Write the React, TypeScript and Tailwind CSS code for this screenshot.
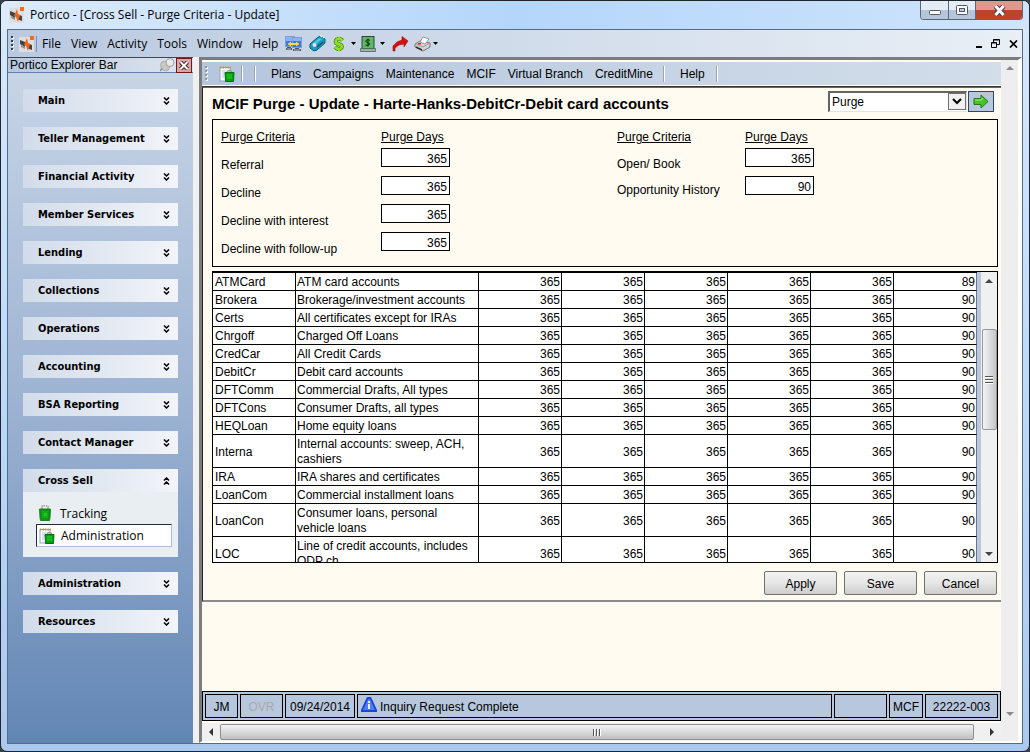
import React, { useState } from 'react';

const sections = [
	'Main',
	'Teller Management',
	'Financial Activity',
	'Member Services',
	'Lending',
	'Collections',
	'Operations',
	'Accounting',
	'BSA Reporting',
	'Contact Manager',
	'Cross Sell',
	'Administration',
	'Resources',
];

const menus = ['File', 'View', 'Activity', 'Tools', 'Window', 'Help'];
const formMenus = ['Plans', 'Campaigns', 'Maintenance', 'MCIF', 'Virtual Branch', 'CreditMine'];

const leftCriteria = [
	{ id: 'referral', label: 'Referral', days: '365' },
	{ id: 'decline', label: 'Decline', days: '365' },
	{ id: 'decline-interest', label: 'Decline with interest', days: '365' },
	{ id: 'decline-follow', label: 'Decline with follow-up', days: '365' },
];
const rightCriteria = [
	{ id: 'open-book', label: 'Open/ Book', days: '365' },
	{ id: 'history', label: 'Opportunity History', days: '90' },
];

const rows = [
	['ATMCard', 'ATM card accounts', '89'],
	['Brokera', 'Brokerage/investment accounts', '90'],
	['Certs', 'All certificates except for IRAs', '90'],
	['Chrgoff', 'Charged Off Loans', '90'],
	['CredCar', 'All Credit Cards', '90'],
	['DebitCr', 'Debit card accounts', '90'],
	['DFTComm', 'Commercial Drafts, All types', '90'],
	['DFTCons', 'Consumer Drafts, all types', '90'],
	['HEQLoan', 'Home equity loans', '90'],
	['Interna', 'Internal accounts: sweep, ACH, cashiers', '90'],
	['IRA', 'IRA shares and certificates', '90'],
	['LoanCom', 'Commercial installment loans', '90'],
	['LoanCon', 'Consumer loans, personal vehicle loans', '90'],
	['LOC', 'Line of credit accounts, includes ODP ch', '90'],
];

const PorticoIcon = () => (
	<svg width="16" height="16" viewBox="0 0 16 16" className="shrink-0">
		<rect x="0" y="1" width="15" height="15" fill="#dedede" />
		<path d="M1 4l5 2v5L1 8zM8 7l5 2v5l-5-2z" fill="#3f444b" />
		<path d="M2 9l4 2v2l-4-2z" fill="#8a8f96" />
		<path d="M8 2l1 5 2 1-2 7-2-5-2-1z" fill="#f0641e" />
		<rect x="11" y="0" width="4" height="4" fill="#ff6a13" />
	</svg>
);

const BagIcon = () => (
	<svg width="14" height="16" viewBox="0 0 14 16" className="shrink-0">
		<path d="M4 4V2q0-1.500 3-1.500T10 2v2" fill="none" stroke="#a8a8a8" strokeWidth="2" strokeDasharray="1.500 .6" />
		<path d="M1.500 4h11l-.5 9-.5 2.500h-9L2 13z" fill="#0a9a12" stroke="#087010" strokeWidth=".8" />
		<rect x="4" y="6" width="6" height="7" fill="#10ad18" />
		<rect x="6" y="8" width="3" height="3" fill="#22c628" />
	</svg>
);

const PadBagIcon = () => (
	<svg width="16" height="16" viewBox="0 0 16 16" className="shrink-0">
		<rect x="1" y="1.500" width="10" height="13.500" fill="#f6fafd" stroke="#8fa6bd" />
		<path d="M1 1.500h11" stroke="#b99a4c" strokeDasharray="1.500 1" strokeWidth="2" />
		<path d="M3 5h5M3 7h3M3 9h2M3 11h2" stroke="#b3c9dc" />
		<path d="M8.500 6.500q0-2 2-2t2 2" fill="none" stroke="#9b9b9b" strokeWidth="1.500" />
		<path d="M6 6.500h9l-.5 9H6.500z" fill="#0b9c13" stroke="#076d0e" />
		<rect x="8" y="8" width="5" height="5" fill="#14bb1c" />
	</svg>
);

const ComputersIcon = () => (
	<svg width="17" height="16" viewBox="0 0 17 16">
		<path d="M2 11h4v1h1v2H1v-2h1zM10 12h4v1h2v2H8v-2h2z" fill="#4f5460" />
		<path d="M2 13h4M9 14h6" stroke="#b9bfca" />
		<rect x=".5" y=".5" width="9" height="10" fill="#3b78dc" stroke="#8d9ad0" />
		<rect x="7.500" y="1.500" width="9" height="10" fill="#3b78dc" stroke="#8d9ad0" />
		<path d="M1 1h6v4H1zM8 2h8v3H8z" fill="#7fb8f6" />
		<path d="M2.500 8L6 5.500V7h5V5.500L14.500 8 11 10.500V9H6v1.500z" fill="#ffdc32" />
	</svg>
);

const TagIcon = () => (
	<svg width="17" height="17" viewBox="0 0 17 17">
		<path d="M1 9l7-6 3-2 2 1 3 2v4l-8 7-3 1-4-3z" fill="#149cc4" stroke="#075a72" />
		<path d="M3 9l7-6 3 1-7 6z" fill="#45c8e4" />
		<circle cx="5.500" cy="10" r="2" fill="#f6d9ee" />
		<path d="M8 12l6-5" stroke="#045066" strokeWidth="1.500" />
		<path d="M11 0l2 2M14 2l1 1" stroke="#e8f8ff" strokeWidth="1.500" />
	</svg>
);

const DollarIcon = () => (
	<svg width="12" height="16" viewBox="0 0 12 16" fill="none">
		<path d="M9.500 4.500Q8 2.500 5 3T3 7l5 2q2 2-.5 3.500T2 11M6 1v2M6 12v3" stroke="#4a8f0a" strokeWidth="4" />
		<path d="M9.500 4.500Q8 2.500 5 3T3 7l5 2q2 2-.5 3.500T2 11M6 .5V3M6 12v3.500" stroke="#8ee022" strokeWidth="2.500" />
	</svg>
);

const CashIcon = () => (
	<svg width="16" height="16" viewBox="0 0 16 16">
		<rect x="2" y=".5" width="12" height="13" fill="#5fb868" stroke="#33463a" />
		<path d="M.5 12.500h15v3H.5z" fill="#a4aca8" stroke="#54605a" strokeWidth=".8" />
		<rect x="2" y="12" width="12" height="1" fill="#3b7a46" />
		<path d="M10 4.500Q8 3 6.500 4t0 2.300l2.500.7q1.500 1-.2 2T5.500 9M8 2.500v8" fill="none" stroke="#0c2c12" />
	</svg>
);

const RedoIcon = () => (
	<svg width="17" height="16" viewBox="0 0 17 16">
		<path d="M1 15V10L5 6l5-2V.5L16 5l-4 6V8L7 9l-4 3v3z" fill="#d80f0f" stroke="#a00808" strokeWidth=".6" />
	</svg>
);

const PrinterIcon = () => (
	<svg width="17" height="16" viewBox="0 0 17 16">
		<path d="M1 8l5-3 10 2v4l-7 4-8-4z" fill="#d6d6d6" stroke="#777" />
		<path d="M1 8l8 3 7-4" fill="none" stroke="#9a9a9a" />
		<path d="M6 6l3-5 6 2-4 5z" fill="#fff" stroke="#777" strokeWidth=".7" />
		<path d="M2 11l6 3" stroke="#333" strokeWidth="1.500" />
		<rect x="4" y="7" width="3" height="1.500" fill="#e02020" />
	</svg>
);

const DropArrow = () => (
	<svg width="5" height="3" viewBox="0 0 5 3">
		<path d="M0 0h5L2.500 3z" fill="#000" />
	</svg>
);

const Chevrons = ({ up }: { up?: boolean }) => (
	<svg width="7" height="8" viewBox="0 0 7 8" className={up ? 'rotate-180' : ''}>
		<path d="M1 .5l2.500 2.500L6 .5M1 4.500L3.500 7 6 4.500" fill="none" stroke="#000" strokeWidth="1.500" />
	</svg>
);

const Grip = ({ dark }: { dark?: boolean }) => (
	<svg width="3" height="15" viewBox="0 0 3 15" className="shrink-0">
		{[0, 4, 8, 12].map((y) => (
			<g key={y}>
				<rect x="1" y={y + 1} width="2" height="2" fill="#fff" />
				<rect x="0" y={y} width="2" height="2" fill={dark ? '#2a3f68' : '#8d99ab'} />
			</g>
		))}
	</svg>
);

const ScrollArrow = ({ d, color }: { d: string; color: string }) => (
	<svg width="8" height="8" viewBox="0 0 8 8">
		<path d={d} fill={color} />
	</svg>
);

const Sep = () => <span className="h-4 w-[2px] border-l border-[#9aa5b4] bg-white" />;

type Criterion = { id: string; label: string; days: string };

const CriteriaGroup = ({ items, labelWidth, rowHeight }: { items: Criterion[]; labelWidth: string; rowHeight: string }) => (
	<div className="flex">
		<div className={labelWidth}>
			<div className="mb-[6px] leading-4 underline">Purge Criteria</div>
			{items.map((item) => (
				<label key={item.id} htmlFor={item.id} className={`flex items-center ${rowHeight}`}>
					{item.label}
				</label>
			))}
		</div>
		<div>
			<div className="mb-[3px] leading-4 underline">Purge Days</div>
			<div className="flex flex-col gap-[9px]">
				{items.map((item) => (
					<input
						key={item.id}
						id={item.id}
						defaultValue={item.days}
						className="h-[19px] w-[69px] border border-black bg-white px-[2px] pt-[2px] text-right"
					/>
				))}
			</div>
		</div>
	</div>
);

const ExplorerBar = () => {
	const [open, setOpen] = useState('Cross Sell');

	return (
		<aside className="flex w-[185px] shrink-0 flex-col bg-linear-to-b from-[#c9d6e7] via-[#9db3d3] to-[#6286b4]">
			<div className="flex h-4 items-center border-t border-b border-t-[#3c4658] border-b-[#5d80ae] bg-linear-to-r from-[#b6c7de] to-[#dfe5ee] pr-px pl-[2px] font-['Liberation_Sans',sans-serif] text-[12px]">
				<span className="flex-1">Portico Explorer Bar</span>
				<svg width="16" height="14" viewBox="0 0 16 14">
					<path d="M3 9l-3 4" stroke="#888" strokeWidth="1.500" />
					<ellipse cx="5" cy="8" rx="4" ry="5" fill="#c6c6c6" stroke="#a8a8a8" transform="rotate(-30 5 8)" />
					<circle cx="10" cy="4.500" r="4" fill="#e9e9e9" stroke="#a0a0a0" />
				</svg>
				<button aria-label="Close explorer" className="flex h-[15px] w-4 items-center justify-center border border-[#6b1a1a] bg-[#d8a6a4]">
					<svg width="10" height="9" viewBox="0 0 10 9">
						<path d="M1.500 1l7 7M8.500 1l-7 7" stroke="#40201f" strokeWidth="4" />
						<path d="M1.500 1l7 7M8.500 1l-7 7" stroke="#fff" strokeWidth="2" />
					</svg>
				</button>
			</div>
			<nav className="flex flex-col gap-[15px] px-[15px] pt-4 font-['DejaVu_Sans_Condensed','DejaVu_Sans',sans-serif] text-[11px]">
				{sections.map((name) => (
					<div key={name}>
						<button
							onClick={() => setOpen(open === name ? '' : name)}
							className="flex h-[23px] w-full items-center justify-between bg-linear-to-r from-[#d2dcea] to-[#f2f4f9] pr-2 pl-[15px] font-bold"
						>
							<span className="pt-[2px]">{name}</span>
							<Chevrons up={open === name} />
						</button>
						{open === name && name === 'Cross Sell' && (
							<div className="bg-[#e9eef3] px-[6px] pt-[10px] pb-[10px] pl-[13px] font-['Open_Sans',sans-serif] text-[12px]">
								<a href="#tracking" className="flex h-[22px] items-center gap-2 pl-[2px]">
									<BagIcon />
									<span className="pt-px">Tracking</span>
								</a>
								<a
									href="#administration"
									className="flex h-[23px] items-center gap-[6px] border border-t-[#1d2b3f] border-r-[#a9bdd8] border-b-[#a9bdd8] border-l-[#1d2b3f] bg-white pl-[2px]"
								>
									<PadBagIcon />
									<span className="pt-px">Administration</span>
								</a>
							</div>
						)}
					</div>
				))}
			</nav>
		</aside>
	);
};

const PurgeTable = () => (
	<div className="flex h-[292px] overflow-hidden border border-black bg-white">
		<div className="min-w-0 flex-1 overflow-hidden border-t border-black">
			<table className="w-full table-fixed border-separate border-spacing-0">
				<colgroup>
					<col className="w-[83px]" />
					<col className="w-[183px]" />
					<col />
					<col />
					<col />
					<col />
					<col />
					<col />
				</colgroup>
				<tbody>
					{rows.map(([code, text, last]) => (
						<tr key={code} className="leading-[15px]">
							<td className="border-r border-b border-black pt-[2px] pr-px pl-[2px]">{code}</td>
							<td className="border-r border-b border-black pt-[2px] pr-px pl-px">{text}</td>
							{[1, 2, 3, 4, 5].map((n) => (
								<td key={n} className="border-r border-b border-black pt-[2px] pr-px text-right">365</td>
							))}
							<td className="border-r border-b border-black border-r-[#6d7683] pt-[2px] pr-px text-right">{last}</td>
						</tr>
					))}
				</tbody>
			</table>
		</div>
		<div className="w-[4px] bg-[#b8c9df]" />
		<div className="flex w-4 flex-col items-center bg-[#f0f0f0]">
			<div className="flex h-[17px] items-center"><ScrollArrow d="M0 6L4 2l4 4z" color="#444" /></div>
			<div className="mt-[40px] flex h-[101px] w-[15px] flex-col items-center justify-center gap-px rounded-xs border border-[#979797] bg-linear-to-r from-[#f4f4f4] to-[#c6c6cb]">
				<span className="h-[2px] w-2 border-t border-[#555] bg-white" />
				<span className="h-[2px] w-2 border-t border-[#555] bg-white" />
				<span className="h-[2px] w-2 border-t border-[#555] bg-white" />
			</div>
			<div className="mt-auto flex h-[17px] items-center"><ScrollArrow d="M0 2h8L4 6z" color="#444" /></div>
		</div>
	</div>
);

const StatusBar = () => (
	<footer className="flex h-[30px] gap-[2px] border border-black bg-[#b7c8de] p-[2px]">
		<div className="flex w-[33px] items-center justify-center border border-black pt-[2px]">JM</div>
		<div className="flex w-[43px] items-center justify-center border border-black pt-[2px] text-[#a9a9a9]">OVR</div>
		<div className="flex w-[70px] items-center justify-center border border-black pt-[2px]">09/24/2014</div>
		<div className="flex flex-1 items-center gap-[3px] border border-black pt-[2px] pl-[3px]">
			<svg width="16" height="16" viewBox="0 0 16 16" className="mb-1">
				<path d="M6 0h4l6 13v2H0v-2z" fill="#1b45d8" />
				<path d="M7 2h2l5 11H2z" fill="#4f7df0" />
				<path d="M7 4h2v2H7zM7 7h2v5H7z" fill="#e8effd" />
			</svg>
			Inquiry Request Complete
		</div>
		<div className="w-[53px] border border-black" />
		<div className="flex w-[34px] items-center justify-center border border-black pt-[2px]">MCF</div>
		<div className="flex w-[73px] items-center justify-center border border-black pt-[2px]">22222-003</div>
	</footer>
);

const PurgeForm = () => (
	<div className="flex min-w-0 flex-1 flex-col bg-[#fffbf0] text-[12px]">
		<div className="mt-[2px] flex h-[23px] items-center bg-linear-to-r from-[#b5c5dc] to-[#d2deea]">
			<div className="flex items-center gap-[11px] pr-[3px] pl-[3px]">
				<Grip />
				<PadBagIcon />
				<span className="-ml-[5px] flex"><Sep /></span>
				<Sep />
			</div>
			{formMenus.map((item) => (
				<button key={item} className="ml-3">{item}</button>
			))}
			<span className="ml-[10px] flex"><Sep /></span>
			<button className="mr-[11px] ml-[15px]">Help</button>
			<Sep />
		</div>
		<div className="h-[2px] border-b border-[#333]" />
		<div className="border-t border-b-2 border-l border-t-[#666] border-b-[#8b8b8b] border-l-[#222] pt-[2px] pr-[3px] pb-[5px] pl-[9px]">
			<div className="flex h-[29px] items-start pr-1">
				<h1 className="flex-1 pt-[5px] text-[15px] leading-[18px] font-bold">MCIF Purge - Update - Harte-Hanks-DebitCr-Debit card accounts</h1>
				<div className="relative mt-px mr-px w-[139px]">
					<select
						aria-label="Form"
						className="h-[21px] w-full appearance-none border-t-2 border-r border-b border-l-2 border-t-[#646464] border-r-[#e3e3e3] border-b-[#e3e3e3] border-l-[#646464] bg-white pl-[2px] text-[12px]"
					>
						<option>Purge</option>
					</select>
					<span className="pointer-events-none absolute top-[2px] right-px flex h-[17px] w-[18px] items-center justify-center border border-[#707070] bg-[#f0f0f0]">
						<svg width="10" height="7" viewBox="0 0 10 7">
							<path d="M1 1l4 4 4-4" fill="none" stroke="#000" strokeWidth="2" />
						</svg>
					</span>
				</div>
				<button aria-label="Go" className="mt-px flex h-[21px] w-[26px] items-center justify-center border border-[#2c4668] bg-[#b7c8de]">
					<svg width="16" height="15" viewBox="0 0 16 15">
						<path d="M1 4.500h7V1l7 6.500L8 14v-3.500H1z" fill="#46c423" stroke="#217a12" />
						<path d="M2 6h7V4" fill="none" stroke="#a4ec7c" />
					</svg>
				</button>
			</div>
			<div className="flex h-[148px] gap-[167px] border border-black pt-[9px] pl-2">
				<CriteriaGroup items={leftCriteria} labelWidth="w-[160px]" rowHeight="h-7" />
				<CriteriaGroup items={rightCriteria} labelWidth="w-[128px]" rowHeight="h-[26px]" />
			</div>
			<div className="mt-1">
				<PurgeTable />
			</div>
			<div className="mt-2 flex justify-end gap-[7px] pr-px">
				{['Apply', 'Save', 'Cancel'].map((label) => (
					<button
						key={label}
						className="h-6 w-[73px] rounded-xs border border-[#707070] bg-linear-to-b from-[#f2f2f2] via-[#e6e6e6] to-[#cdcdcd] pt-[2px]"
					>
						{label}
					</button>
				))}
			</div>
		</div>
		<div className="min-h-4 flex-1" />
		<StatusBar />
		<div className="mt-[2px] flex h-[18px] items-center bg-[#f0f0f0]">
			<div className="flex w-[18px] justify-center"><ScrollArrow d="M6 0L2 4l4 4z" color="#333" /></div>
			<div className="mr-[9px] flex h-4 flex-1 items-center justify-center gap-px rounded-xs border border-[#8f8f8f] bg-linear-to-b from-[#f4f4f4] to-[#bfc0c4]">
				<span className="h-[7px] w-[2px] border-l border-[#555] bg-white" />
				<span className="h-[7px] w-[2px] border-l border-[#555] bg-white" />
				<span className="h-[7px] w-[2px] border-l border-[#555] bg-white" />
			</div>
			<div className="flex w-[18px] justify-center"><ScrollArrow d="M2 0l4 4-4 4z" color="#333" /></div>
		</div>
	</div>
);

const App: React.FC = () => {
	return (
		<div className="min-h-screen bg-[#3b4048]">
			<div className="flex min-h-screen flex-col overflow-hidden rounded-[7px] border border-[#20242c] bg-linear-to-b from-[#d8e9fb] via-[#bddafb] to-[#a9c9ee] px-[6px] pb-[7px] font-['Liberation_Sans',sans-serif] text-black">
				<header className="-mx-[6px] flex h-7 items-start bg-linear-to-r from-[#dcebfb] via-[#b4d6fb] to-[#cfe4fb] pr-[6px] pl-2">
					<div className="flex h-7 flex-1 items-center gap-[5px] font-['Open_Sans',sans-serif] text-[12px]">
						<PorticoIcon />
						Portico - [Cross Sell - Purge Criteria - Update]
					</div>
					<div className="flex h-[19px] overflow-hidden rounded-b-[4px] border border-t-0 border-[#59677b]">
						<button aria-label="Minimize" className="flex w-[28px] items-center justify-center border-r border-[#59677b] bg-linear-to-b from-[#e4ecf5] from-50% to-[#b6c6da] to-50% pt-1">
							<svg width="12" height="5" viewBox="0 0 12 5"><rect x=".5" y=".5" width="11" height="4" rx="1" fill="#fff" stroke="#535666" /></svg>
						</button>
						<button aria-label="Maximize" className="flex w-[27px] items-center justify-center border-r border-[#59677b] bg-linear-to-b from-[#e4ecf5] from-50% to-[#b6c6da] to-50%">
							<svg width="12" height="10" viewBox="0 0 12 10">
								<rect x=".5" y=".5" width="11" height="9" rx="1" fill="#fff" stroke="#535666" />
								<rect x="3.500" y="3.500" width="5" height="3" fill="#b8cbe2" stroke="#535666" />
							</svg>
						</button>
						<button aria-label="Close" className="flex w-[46px] items-center justify-center bg-linear-to-b from-[#dd9a8c] from-50% to-[#c2412b] to-50%">
							<svg width="13" height="11" viewBox="0 0 13 11">
								<path d="M2.500 1l8 9M10.500 1l-8 9" stroke="#4b3a46" strokeWidth="5" />
								<path d="M2.500 1l8 9M10.500 1l-8 9" stroke="#fff" strokeWidth="3" />
							</svg>
						</button>
					</div>
				</header>
				<div className="flex flex-1 flex-col border border-[#5a6b80] bg-[#f0f0f0]">
					<div className="flex h-[27px] shrink-0 items-center bg-linear-to-r from-[#b9c9e0] to-[#e9eff5] pr-1 pl-[3px] font-['Open_Sans',sans-serif] text-[12px]">
						<Grip dark />
						<span className="mr-px ml-[5px]"><PorticoIcon /></span>
						<span className="h-4 w-px bg-[#6d93c8]" />
						{menus.map((item) => (
							<button key={item} className="px-[5px]">{item}</button>
						))}
						<div className="ml-[2px] flex items-center gap-[7px]">
							<button aria-label="Connect"><ComputersIcon /></button>
							<button aria-label="Tag"><TagIcon /></button>
							<button aria-label="Money" className="flex items-center gap-[6px]"><DollarIcon /><DropArrow /></button>
							<button aria-label="Cash" className="-ml-[3px] flex items-center gap-1"><CashIcon /><DropArrow /></button>
							<button aria-label="Forward"><RedoIcon /></button>
							<button aria-label="Print" className="-ml-[2px] flex items-center gap-[2px]"><PrinterIcon /><DropArrow /></button>
						</div>
						<div className="ml-auto flex items-center gap-[9px]">
							<button aria-label="Minimize form" className="pt-[6px]"><span className="block h-[2px] w-[6px] bg-black" /></button>
							<button aria-label="Restore form">
								<svg width="9" height="9" viewBox="0 0 9 9" fill="none" stroke="#000">
									<path d="M2.500 3V.5h6v5H6M2.500 1h6M.5 3.500h5v5h-5zM.5 4h5" />
								</svg>
							</button>
							<button aria-label="Close form">
								<svg width="9" height="8" viewBox="0 0 9 8"><path d="M1 .5l7 7M8 .5l-7 7" stroke="#000" strokeWidth="1.700" /></svg>
							</button>
						</div>
					</div>
					<div className="flex flex-1">
						<ExplorerBar />
						<main className="ml-[6px] flex min-w-0 flex-1 border-t-3 border-r-4 border-b-2 border-l-3 border-t-[#7c7c7c] border-r-white border-b-white border-l-[#7c7c7c]">
							<PurgeForm />
							<div className="flex w-[17px] flex-col items-center justify-between bg-[#eeeeee] pt-[4px] pb-[23px]">
								<ScrollArrow d="M0 6L4 2l4 4z" color="#8a8a8a" />
								<ScrollArrow d="M0 2h8L4 6z" color="#8a8a8a" />
							</div>
						</main>
					</div>
				</div>
			</div>
		</div>
	);
};

export default App;
